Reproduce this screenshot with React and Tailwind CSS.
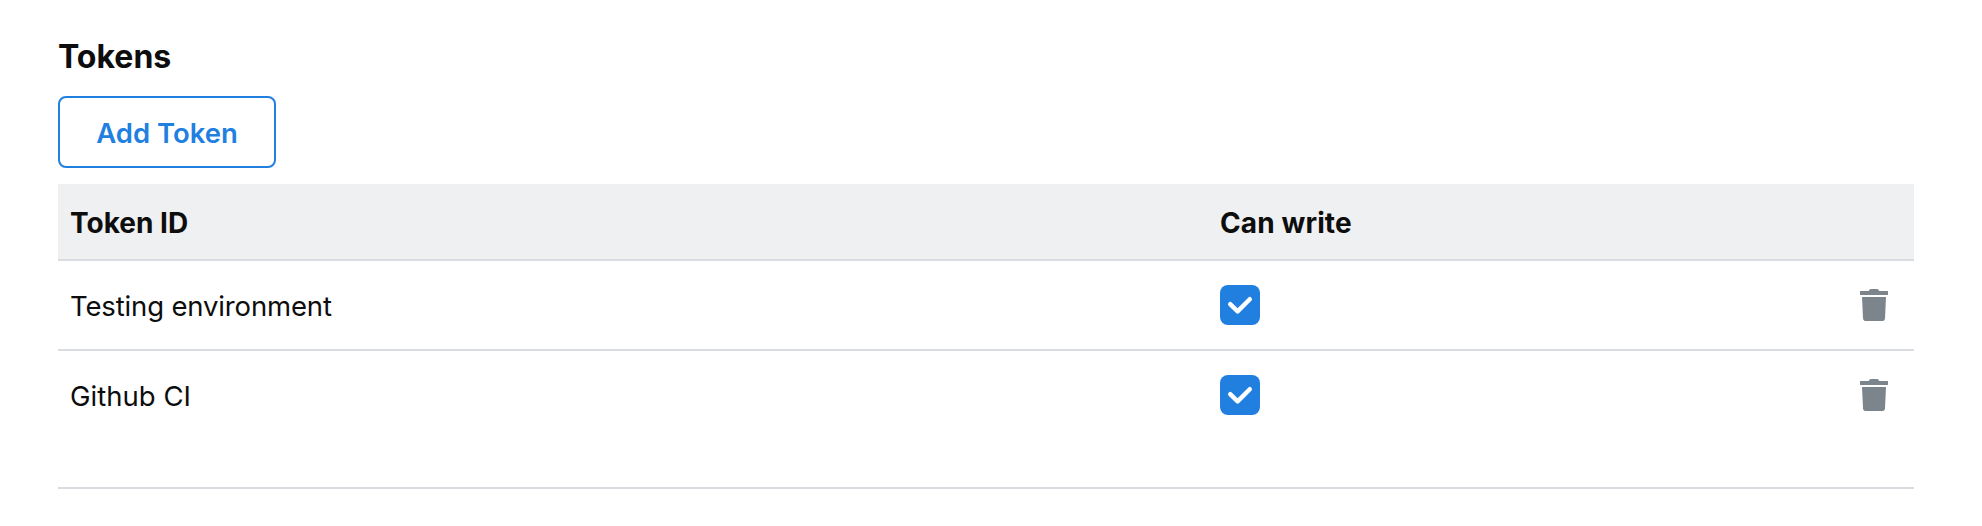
const tokens = [
  { name: 'Testing environment', className: 'tracking-[-0.15px]' },
  { name: 'Github CI', className: 'tracking-[0.03px]' },
];

function Checkbox() {
  return (
    <span role="checkbox" aria-checked="true" className="block size-10 rounded-lg bg-[#2180df]">
      <svg viewBox="0 0 40 40" className="size-10" fill="none" stroke="#fff" strokeWidth="4.4" strokeLinecap="round" strokeLinejoin="round">
        <path d="M10.2 19.2 17.6 26.4 29.8 14.2" />
      </svg>
    </span>
  );
}

function Trash() {
  return (
    <svg viewBox="0 0 28 32" className="h-8 w-7" fill="#7c858c">
      <path d="M0 2.5Q0 2 .5 2H8.800Q9.200 0 11 0H17Q18.800 0 19.200 2H27.500Q28 2 28 2.500V5.500Q28 6 27.500 6H.5Q0 6 0 5.500Z" />
      <path d="M2 8H26L25 29.200Q24.800 32 22 32H6Q3.200 32 3 29.200Z" />
    </svg>
  );
}

export default function App() {
  return (
    <main className="h-[526px] bg-white pr-[68px] pl-[58px] pt-9 font-['Inter',sans-serif] text-[27.5px] leading-10 text-[#0d0d0d]">
      <h2 className="h-[60px] pt-px text-[32px] leading-[39px] font-bold">Tokens</h2>
      <button className="flex h-[72px] w-[218px] items-center justify-center rounded-lg border-2 border-[#2180df] pt-0.5 font-semibold tracking-[-0.04px] text-[#2180df]">
        Add Token
      </button>
      <section className="mt-4 h-[305px] border-b-2 border-[#d9dde1]">
        <div className="flex h-[77px] items-center border-b-2 border-[#d9dde1] bg-[#eff0f2] pt-[3px] pl-3 text-[28px] font-bold">
          <span className="w-[1150px]">Token ID</span>
          <span className="tracking-[0.12px]">Can write</span>
        </div>
        {tokens.map(({ name, className }, i) => (
          <div key={name} className={`flex h-[90px] items-center pr-[26px] pl-3 ${i === 0 ? 'border-b-2 border-[#d9dde1]' : 'pb-0.5'}`}>
            <span className={`w-[1150px] pt-0.5 ${className}`}>{name}</span>
            <Checkbox />
            <span className="ml-auto"><Trash /></span>
          </div>
        ))}
      </section>
    </main>
  );
}
